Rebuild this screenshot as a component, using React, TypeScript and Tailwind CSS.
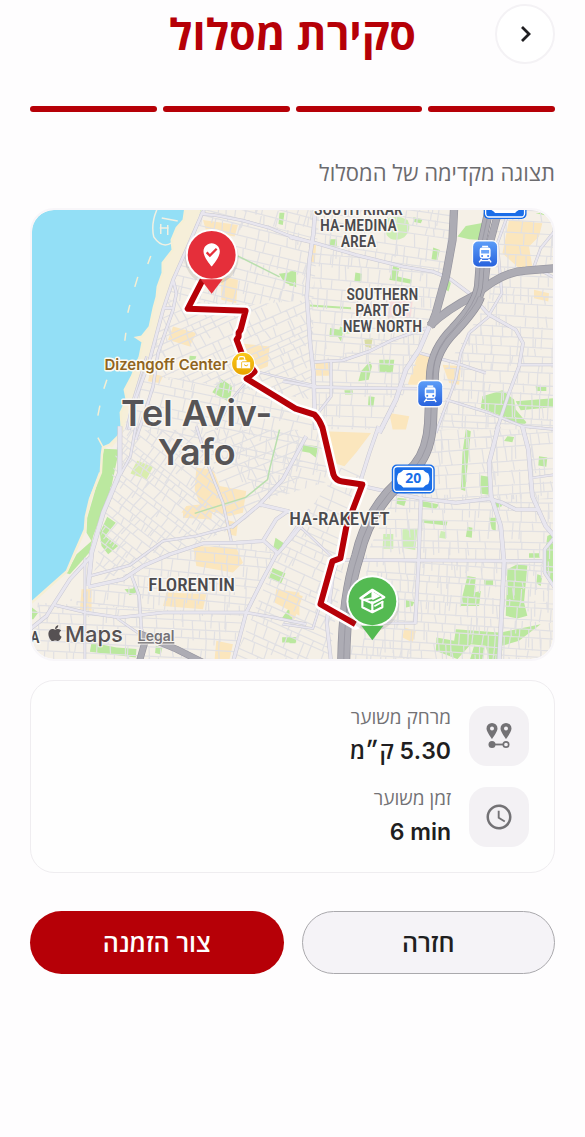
import type { ReactNode } from "react";
import { FaApple } from "react-icons/fa";
import { MdAccessTime, MdWhereToVote } from "react-icons/md";

type Point = [number, number];
type Sheet = "nw" | "ne" | "sw" | "se";

/* The map is drawn on four sheets, each at three units to one map unit. */
const sheetOrigin: Record<Sheet, string> = {
  nw: "translate(30 200) scale(.3333)",
  ne: "translate(290 200) scale(.3333)",
  sw: "translate(30 430) scale(.3333)",
  se: "translate(290 430) scale(.3333)",
};

interface District {
  outline: string;
  center: Point;
  angle: number;
  reach: number;
  row: number;
  block: number;
}

const districts: District[] = [
  { outline: "188,210 320,210 314,300 246,305 160,300", center: [240, 255], angle: 14, reach: 95, row: 8, block: 15 },
  { outline: "160,300 246,305 314,300 314,400 250,390 142,375", center: [230, 345], angle: -24, reach: 100, row: 8, block: 16 },
  { outline: "140,375 250,385 320,415 335,480 270,500 205,440 120,430", center: [225, 430], angle: 12, reach: 120, row: 9, block: 17 },
  { outline: "310,210 455,210 445,275 312,244", center: [380, 240], angle: 8, reach: 90, row: 9, block: 15 },
  { outline: "312,244 445,275 428,330 345,362 312,362", center: [370, 300], angle: 5, reach: 90, row: 10, block: 14 },
  { outline: "314,362 428,330 412,380 385,430 316,430", center: [365, 390], angle: 2, reach: 80, row: 10, block: 16 },
  { outline: "495,210 554,210 554,430 440,430 445,370 490,300", center: [510, 330], angle: 3, reach: 130, row: 9, block: 15 },
  { outline: "120,430 205,430 230,530 160,560 92,585 110,490", center: [160, 500], angle: 38, reach: 95, row: 8, block: 14 },
  { outline: "205,430 300,430 300,480 232,530", center: [255, 480], angle: -22, reach: 80, row: 9, block: 18 },
  { outline: "92,590 170,555 240,542 280,550 248,615 60,605", center: [180, 580], angle: 6, reach: 120, row: 9, block: 15 },
  { outline: "32,603 248,615 236,660 32,660", center: [130, 630], angle: 3, reach: 115, row: 8, block: 16 },
  { outline: "280,550 340,470 372,430 345,560 330,660 235,660", center: [300, 570], angle: 24, reach: 110, row: 8, block: 19 },
  { outline: "395,495 554,495 554,560 365,560", center: [460, 530], angle: 1, reach: 105, row: 10, block: 17 },
  { outline: "430,430 554,430 554,500 400,500", center: [490, 465], angle: -4, reach: 90, row: 10, block: 16 },
  { outline: "365,562 554,562 554,660 350,660", center: [455, 610], angle: 4, reach: 110, row: 9, block: 11 },
];

function streetGrid(d: District, seed: number): string {
  let state = seed * 7919 + 13;
  const random = () => {
    state = (state * 16807) % 2147483647;
    return state / 2147483647;
  };
  const parts: string[] = [];
  for (let y = -d.reach; y < d.reach; ) {
    const height = Math.round(d.row * (0.7 + random() * 0.8));
    const start = -d.reach + Math.round(random() * 30);
    parts.push(`M${start} ${y}L${d.reach} ${y + Math.round(random() * 4 - 2)}`);
    for (let x = start; x < d.reach; x += Math.round(d.block * (0.4 + random()))) {
      const tall = random() > 0.65 ? 2 : 1;
      parts.push(`M${x} ${y}L${x + Math.round(random() * 3 - 1)} ${y + height * tall}`);
    }
    y += height;
  }
  return parts.join("");
}

interface Area {
  sheet: Sheet;
  fill: string;
  d: string;
}

const green = "#bbe89f";
const paleGreen = "#cdeeb5";
const amber = "#fbe6bd";

const areas: Area[] = [
  { sheet: "nw", fill: green, d: "M470 30H515L495 60L470 70ZM750 38H765L760 75L747 72ZM748 222L800 215V262L765 248ZM480 468L500 470L495 485L478 482ZM575 538L608 560L600 608L548 578Z" },
  { sheet: "nw", fill: amber, d: "M520 60L625 75L615 110L530 95ZM575 230L625 240L620 310L575 300ZM430 380L500 400L480 440L415 420ZM620 430L720 440L715 500L690 510L640 480ZM470 300L500 310L495 325L470 325ZM360 520L400 530L390 550L355 545Z" },
  { sheet: "ne", fill: paleGreen, d: "M285 60Q320 40 355 60Q370 90 345 112Q310 130 292 105Z" },
  { sheet: "ne", fill: green, d: "M372 52L400 58L395 70L375 66ZM530 78L600 65L575 120L540 118L505 110ZM122 118H142V140H120ZM432 143L452 150L445 180L427 178ZM0 215L18 212L10 258H0ZM198 218L218 222L215 248L195 245ZM312 198L330 205L325 230L368 240L365 252L300 240ZM62 314L185 322V328L62 320ZM122 385L150 390L152 380L186 392L182 402L160 400L155 425L145 410H120ZM242 485L248 500L238 540L207 545L215 515ZM270 480H315L310 520H270ZM165 572H190V585H167ZM238 590L256 592L252 622L236 618ZM740 560L772 558V574H742ZM478 240L485 250L478 275L470 270ZM680 605L792 596V622L695 632ZM580 590L640 572L675 600L680 630L712 668L700 684L640 650L575 625ZM740 40L790 50L785 35Z" },
  { sheet: "ne", fill: amber, d: "M388 460L425 468L412 555H355ZM660 60L760 70L750 110L720 140L730 200L690 205L640 160ZM460 495L515 500L510 555L480 550ZM78 488L122 490L118 528H80ZM300 640L360 650L350 690H310ZM60 130L80 135L76 190L58 180ZM735 270L780 280L778 305L735 295Z" },
  { sheet: "ne", fill: "#f8dcdc", d: "M300 300L370 305L365 350L295 355Z" },
  { sheet: "ne", fill: "#d9dda3", d: "M225 420L250 415L245 445L228 440Z" },
  { sheet: "sw", fill: green, d: "M222 58L268 60L245 170L190 320L178 370L120 435L110 432L140 375L185 335L170 310L172 265L188 210L208 140ZM232 262L258 280L225 320L265 350L235 375L215 350L210 310ZM738 325L768 345L755 368L732 352ZM730 416L768 432L755 462L718 448ZM315 455L328 485L300 498L284 480L310 478ZM0 530L25 550L10 570H0ZM780 535L792 575L755 570ZM758 624H800V640H758ZM185 640L260 655L320 660L318 685L180 668ZM378 650L398 656L393 676L376 672Z" },
  { sheet: "sw", fill: "#d9edae", d: "M322 94L370 112L350 150L302 132Z" },
  { sheet: "sw", fill: amber, d: "M500 115L550 120L570 170L650 185L640 250L600 260L520 240L455 250L470 230L510 225L495 180ZM460 240L550 230L545 270L460 265ZM490 350L620 355L640 400L610 430L500 410ZM410 490L530 495L520 540L400 530ZM740 480L810 490V560L735 520ZM155 480H185V545L150 540ZM560 635L610 645L600 690H555ZM585 270L625 280L620 320L595 315Z" },
  { sheet: "se", fill: amber, d: "M105 5L245 10L200 70L165 110L130 100ZM0 490L40 500L15 570L0 560ZM345 595L380 605L370 640L340 625Z" },
  { sheet: "se", fill: green, d: "M35 45L85 50L80 85L60 70L35 65ZM530 0L545 5L528 185L515 180L520 70ZM655 20L675 22L670 38L645 34ZM750 80L775 84L772 112L748 108ZM575 138L600 142L598 196L573 192ZM325 205L352 208L345 230L320 222ZM400 215L450 225L440 238L400 232ZM620 210L640 230L625 235L610 215ZM398 270L475 276L472 288L400 280ZM535 292L550 295L548 325L530 322ZM600 265H620V305L608 300ZM720 372H752V385H720ZM745 435L760 440L755 470L742 462ZM655 420L685 405L715 408L705 520L715 560L685 568L650 560ZM535 440L560 445L555 490L575 485L570 530H515L520 500ZM585 450L612 452V468H585ZM500 600L630 610L625 690H600L590 650L545 645L505 690L440 665L442 625L495 635ZM635 610L755 585L690 635L640 650ZM350 512L375 518L370 530L350 535ZM0 625H18V642H0ZM775 320L795 310V470L780 450L765 400ZM625 655L640 660L635 690H625ZM555 650L585 655L580 690H543Z" },
  { sheet: "se", fill: paleGreen, d: "M340 300L385 298L378 362L338 355ZM455 305L470 308V328L450 325ZM282 314H312V358H280Z" },
];

interface Road {
  sheet: Sheet;
  width: number;
  d: string;
}

const streets: Road[] = [
  { sheet: "nw", width: 10, d: "M520 34L470 150L430 240L400 330L360 480L320 590L298 690" },
  { sheet: "nw", width: 9, d: "M430 240L440 280L430 330L385 460L370 560L345 640L318 720M402 325H432" },
  { sheet: "nw", width: 9, d: "M522 30V42L560 46L640 62L720 84L780 108L860 130" },
  { sheet: "nw", width: 6, d: "M680 515L740 530L860 558M655 540L605 600L560 690M350 470L310 600L290 690" },
  { sheet: "ne", width: 12, d: "M78 20L72 100L60 180L52 290L62 430L72 520L75 620L78 690" },
  { sheet: "ne", width: 10, d: "M0 112L80 130L200 165L340 200L430 215L480 235L540 280L600 345L680 390L702 430L690 500L660 580L620 700" },
  { sheet: "ne", width: 9, d: "M75 487L160 482L240 455L310 420L410 385M-20 545L75 562L220 565L385 567" },
  { sheet: "ne", width: 14, d: "M420 380L390 450L350 510L320 600L270 700" },
  { sheet: "ne", width: 8, d: "M125 487V590L82 645M600 350L540 400L515 460L500 540L470 620L440 700M392 460L500 490L590 520M690 495H800M470 600L600 640L700 680L800 690M600 345L638 280L625 130L665 20M800 90L755 145L735 200M740 205L800 235" },
  { sheet: "sw", width: 14, d: "M270 -10V130L220 250L185 370L175 470" },
  { sheet: "sw", width: 8, d: "M318 -10L302 80L272 135M500 -10L540 120L580 220L605 335M180 440L300 408L400 335L500 320L605 292" },
  { sheet: "sw", width: 11, d: "M175 473L280 450L340 410L420 375L520 342L620 340L700 335L740 270L775 245M605 295L690 225L760 150L830 20" },
  { sheet: "sw", width: 11, d: "M690 225L775 245L810 260M700 332L745 372L790 320L830 270M742 372L700 450L650 550L610 700M0 600L50 560L75 520L120 450L180 385" },
  { sheet: "sw", width: 9, d: "M75 528L170 550L270 565L400 550L520 550L650 550L720 562L830 585M305 438L328 500L335 600L350 640" },
  { sheet: "sw", width: 7, d: "M262 568L330 615M165 385V690" },
  { sheet: "se", width: 11, d: "M268 -10L240 70L215 150L170 300L130 440L112 580L125 700M395 200L388 400L378 585M220 170L320 192L400 208L500 220L600 208L640 220L680 240L745 240" },
  { sheet: "se", width: 13, d: "M628 -10L600 100L606 200L635 290L645 400L630 700M700 -10L718 60L730 200L770 290L800 325" },
  { sheet: "se", width: 10, d: "M160 392L390 393L760 395M800 320L767 360V430L800 480" },
  { sheet: "se", width: 7, d: "M730 145L800 135M200 582H380M30 290L130 385M-20 585L70 598L95 520M-20 350L60 240" },
];

const trunkRoads: Road[] = [
  { sheet: "sw", width: 20, d: "M345 640L328 700M330 614L440 660L520 700" },
  { sheet: "ne", width: 24, d: "M495 20L490 120L470 230L440 340L425 380" },
  { sheet: "ne", width: 24, d: "M422 378Q470 330 560 285Q640 215 710 212L800 205" },
  { sheet: "ne", width: 22, d: "M632 20L600 140L588 240L568 300" },
];

const motorways: Road[] = [
  { sheet: "ne", width: 26, d: "M602 20L578 130L568 260Q560 310 500 380Q440 440 434 500L428 600" },
  { sheet: "ne", width: 38, d: "M568 290Q560 320 495 390Q435 450 430 520L424 670Q420 750 380 800L300 880Q230 960 205 1070Q165 1190 163 1390" },
];

/* Each layer redraws the same roads: casing, surface, then the centre line. */
function Roads({ roads, color, extra = 0, line }: { roads: Road[]; color: string; extra?: number; line?: number }) {
  return (
    <g fill="none" stroke={color} strokeLinejoin="round">
      {roads.map((road, i) => (
        <path key={i} transform={sheetOrigin[road.sheet]} d={road.d} strokeWidth={line ?? road.width + extra} />
      ))}
    </g>
  );
}

function AreaName({ x, y, lines, large = false }: { x: number; y: number; lines: string[]; large?: boolean }) {
  return (
    <text
      className={
        large
          ? "font-['Roboto_Condensed','Liberation_Sans_Narrow',Roboto,sans-serif] text-[19px] font-medium"
          : "font-['Roboto_Condensed','Liberation_Sans_Narrow',Roboto,sans-serif] text-[16px] font-medium"
      }
      fill="#4b4a4d"
      stroke="#faf8f4"
      strokeWidth="3"
      strokeLinejoin="round"
      paintOrder="stroke"
      textAnchor="middle"
    >
      {lines.map((line, i) => (
        <tspan key={line} x={x} y={y + i * 16}>
          {line}
        </tspan>
      ))}
    </text>
  );
}

function Station({ x, y }: { x: number; y: number }) {
  return (
    <g transform={`translate(${x} ${y})`}>
      <rect x="-13" y="-14" width="26" height="28" rx="6" fill="#fff" opacity=".9" />
      <rect x="-12" y="-12.500" width="24" height="25" rx="5" fill="url(#station)" />
      <path d="M-3-7.500H3" stroke="#fff" strokeWidth="1.500" />
      <rect x="-5.500" y="-6.500" width="11" height="11" rx="2.500" fill="#fff" />
      <path d="M-4-4H4V-.5H-4Z" fill="#6ba4f8" />
      <circle cx="-3" cy="2" r="1" fill="#3b7df0" />
      <circle cx="3" cy="2" r="1" fill="#3b7df0" />
      <path d="M-3.500 5L-6 8.500M3.500 5L6 8.500M-4.500 6.700H4.500" stroke="#fff" strokeWidth="1.400" />
    </g>
  );
}

function RoadShield({ x, y, label }: { x: number; y: number; label?: string }) {
  return (
    <g transform={`translate(${x} ${y})`}>
      <rect x="-21.500" y="-14" width="43" height="29" rx="5" fill="#1a6ee8" />
      <rect x="-19.500" y="-12" width="39" height="25" rx="3.500" fill="#1a6ee8" stroke="#fff" strokeWidth="1.300" />
      <path d="M-10-8.500H10Q12-6 15-5Q17.500 0 15 5.500Q12 6.500 10 9H-10Q-12 6.500-15 5.500Q-17.500 0-15-5Q-12-6-10-8.500Z" fill="#fff" />
      {label && (
        <text className="font-['Open_Sans',sans-serif] text-[14px] font-bold" y="5" fill="#1a6ee8" textAnchor="middle">
          {label}
        </text>
      )}
    </g>
  );
}

function Pin({ x, y, color, children }: { x: number; y: number; color: string; children: ReactNode }) {
  return (
    <g transform={`translate(${x} ${y})`}>
      <circle cy="3" r="27" fill="#555" opacity=".14" />
      <circle r="26" fill="#fff" />
      <circle r="24" fill={color} />
      <path d="M-11 24.500H11L0 39Z" fill={color} />
      {children}
    </g>
  );
}

const coast =
  "M20 200H187L184 220L177 228L172 240L173 250L163 263L163 273L158 287L157 297L154 308L150 327L142 337L137 338L143 342L140 357L132 377L125 390L127 400L121 413L122 430L118 437L110 445L103 448L102 455L101 473L90 500L86 517L85 530L75 553L67 572L50 587L32 603L20 610Z";
const routeLine =
  "M203 280L188 309L246 311L241 330L239 333V337L237 340L243 356L255 372L247 379L296 409L315 415Q320 420 323 428L334 475Q336 481 343 482L363 485L347 527L341 559L333 562L321 605L356 625";

function RouteMap() {
  return (
    <svg
      viewBox="32 210 522 450"
      className="block h-auto w-full rounded-[22px] [direction:ltr]"
      role="img"
      aria-label="Tel Aviv-Yafo"
    >
      <defs>
        <linearGradient id="station" x2="0" y2="1">
          <stop stopColor="#5b9cf8" />
          <stop offset="1" stopColor="#2862dd" />
        </linearGradient>
        <linearGradient id="shop" x2="0" y2="1">
          <stop stopColor="#f9c81c" />
          <stop offset="1" stopColor="#e8a300" />
        </linearGradient>
        {districts.map((d, i) => (
          <clipPath key={i} id={`district-${i}`}>
            <polygon points={d.outline} />
          </clipPath>
        ))}
      </defs>

      <rect x="32" y="210" width="522" height="450" fill="#f5f0e7" />
      {areas.map((area, i) => (
        <path key={i} transform={sheetOrigin[area.sheet]} fill={area.fill} d={area.d} />
      ))}
      {districts.map((d, i) => (
        <g key={i} clipPath={`url(#district-${i})`}>
          <path
            transform={`translate(${d.center[0]} ${d.center[1]}) rotate(${d.angle})`}
            d={streetGrid(d, i + 3)}
            fill="none"
            stroke="#e1e0e3"
            strokeWidth="1.200"
          />
        </g>
      ))}

      <path d="M185 205H203L186 250L176 278L164 310L152 348L140 382L132 402L122 436L112 448L96 440Z" fill="#f6efd9" />
      <path d={coast} fill="#93dff6" stroke="#f6efd4" strokeWidth="2.500" />
      <path d="M157 210Q151 224 154 237Q162 249 172 243M162 218L178 221M160 228H169M161 224V234M168 225V235" fill="none" stroke="#f1f0e2" strokeWidth="1.500" />
      <path d="M151 256L148 264M138 277L135 287M130 305L128 313M126 333L125 341M107 380L104 389M100 406L98 416M98 438L104 449" stroke="#f6efd4" strokeWidth="1.500" />
      <path d="M100 473L91 497L88 512" fill="none" stroke="#f6efd4" strokeWidth="2" />

      <path d="M238 256L262 268L280 277M280 430L270 470L268 480L246 498L195 514" fill="none" stroke="#b9dfae" strokeWidth="1.500" />
      <Roads roads={streets} color="#c9c8d2" extra={1} />
      <Roads roads={streets} color="#e8e6ef" extra={-2} />
      <Roads roads={trunkRoads} color="#9796a0" extra={1} />
      <Roads roads={trunkRoads} color="#adacb4" extra={-3} />
      <Roads roads={motorways} color="#8f8e98" extra={1} />
      <Roads roads={motorways} color="#adacb4" extra={-3} />
      <Roads roads={motorways} color="#92919b" line={2} />

      <path d={routeLine} fill="none" stroke="#fff" strokeWidth="11" strokeLinejoin="round" strokeLinecap="round" />
      <path d={routeLine} fill="none" stroke="#b60007" strokeWidth="6" strokeLinejoin="round" />

      <AreaName x={359} y={215} lines={["SOUTH KIKAR", "HA-MEDINA", "AREA"]} />
      <AreaName x={383} y={300} lines={["SOUTHERN", "PART OF", "NEW NORTH"]} />
      <AreaName x={340} y={526} lines={["HA-RAKEVET"]} large />
      <AreaName x={192} y={592} lines={["FLORENTIN"]} large />
      <AreaName x={35} y={644} lines={["A"]} />

      <g className="font-[Inter,sans-serif]" paintOrder="stroke" strokeLinejoin="round">
        <text className="text-[36px] font-semibold" fill="#565456" stroke="#f8f6f2" strokeWidth="3" textAnchor="middle">
          <tspan x="197" y="426">Tel Aviv-</tspan>
          <tspan x="197" y="465">Yafo</tspan>
        </text>
        <text className="text-[15px] font-semibold" x="228" y="370" fill="#8f6420" stroke="#fdfaf2" strokeWidth="3" textAnchor="end">
          Dizengoff Center
        </text>
        <text className="text-[22px] font-medium" x="65" y="643" fill="#565153" stroke="#f8f6f2" strokeWidth="2">
          Maps
        </text>
        <a href="#legal">
          <text className="text-[14px] font-semibold underline" x="138" y="642" fill="#757276" stroke="#f8f6f2" strokeWidth="2">
            Legal
          </text>
        </a>
      </g>
      <FaApple x="46" y="625" width="18" height="18" size={18} color="#565153" />

      <circle cx="243.500" cy="364" r="12" fill="#fff" />
      <circle cx="243.500" cy="364" r="11" fill="url(#shop)" />
      <path d="M239 360V358.500Q239 357 241 357H243Q245 357 245 358.500V360M242.500 363V361.500Q242.500 360.500 244 360.500" fill="none" stroke="#fff" strokeWidth="1.300" />
      <rect x="237" y="360" width="10" height="8.500" rx="1" fill="#fff" />
      <rect x="242" y="362" width="9" height="7" rx="1" fill="#fff" stroke="#f0b20c" strokeWidth=".8" />
      <path d="M244.500 365Q246.500 367.500 248.500 365" fill="none" stroke="#f0b20c" />

      <Station x={486} y={254} />
      <Station x={431} y={394} />
      <RoadShield x={506} y={204} />
      <RoadShield x={414} y={479} label="20" />

      <Pin x={212} y={255} color="#e52f3a">
        <MdWhereToVote x="-14" y="-14" width="28" height="28" size={28} color="#fff" />
      </Pin>
      <Pin x={373} y={602} color="#54ba52">
        <g fill="none" stroke="#fff" strokeWidth="2.200" strokeLinejoin="round">
          <path d="M-10-3V6L0 11L10 6V0M0 0V11M-12-3L0 2L12-4L0-11.500Z" />
          <path d="M-10-4L0-11V-3L-10-1M2 5L11 0" strokeWidth="1.800" />
          <path d="M0-10L8-5L0-1Z" fill="#fff" stroke="none" />
        </g>
      </Pin>
    </svg>
  );
}

function DistanceIcon() {
  return (
    <svg viewBox="0 0 28 28" className="size-7" fill="none" aria-hidden="true">
      <path
        d="M7 1a5.500 5.500 0 0 0-5.500 5.500C1.500 10 7 17 7 17s5.500-7 5.500-10.500A5.500 5.500 0 0 0 7 1Zm0 7.500a2 2 0 1 1 0-4 2 2 0 0 1 0 4ZM21 1a5.500 5.500 0 0 0-5.500 5.500C15.500 10 21 17 21 17s5.500-7 5.500-10.500A5.500 5.500 0 0 0 21 1Zm0 7.500a2 2 0 1 1 0-4 2 2 0 0 1 0 4Z"
        fill="#737275"
      />
      <circle cx="7" cy="22.500" r="3.500" fill="#737275" />
      <path d="M9 22.500H18" stroke="#737275" strokeWidth="1.800" />
      <circle cx="21" cy="22.500" r="2.700" stroke="#737275" strokeWidth="1.700" />
    </svg>
  );
}

function Metric({ icon, label, value }: { icon: ReactNode; label: string; value: string }) {
  return (
    <div className="flex items-center gap-[18px]">
      <span className="flex size-[60px] shrink-0 items-center justify-center rounded-[18px] bg-[#f3f1f4]">{icon}</span>
      <div>
        <dt className="text-[19px] leading-6 text-[#737275]">{label}</dt>
        <dd className="mt-[6px] text-right font-[Inter,'Open_Sans',sans-serif] text-[23px] leading-8 font-semibold text-[#1f1e21]">
          <bdi>{value}</bdi>
        </dd>
      </div>
    </div>
  );
}

export default function App() {
  return (
    <main
      dir="rtl"
      lang="he"
      className="min-h-screen bg-[#fefdfe] px-[30px] pt-1 font-['Open_Sans','Liberation_Sans',sans-serif]"
    >
      <header className="grid grid-cols-[60px_1fr_60px] items-center">
        <button
          type="button"
          aria-label="חזרה"
          className="flex size-[60px] items-center justify-center rounded-full border-2 border-[#f4f2f5] bg-white"
        >
          <svg viewBox="0 0 20 20" className="size-5" fill="none" stroke="#1f1e21" strokeWidth="2.800" aria-hidden="true">
            <path d="M7 3L14 10L7 17" />
          </svg>
        </button>
        <h1 className="text-center text-[43px] leading-[60px] font-bold text-[#b60007]">סקירת מסלול</h1>
      </header>

      <div className="mt-[42px] grid grid-cols-4 gap-[6px]">
        {[1, 2, 3, 4].map((step) => (
          <span key={step} className="h-[6px] rounded-full bg-[#b60007]" />
        ))}
      </div>

      <h2 className="mt-[46px] text-[22px] leading-7 font-medium text-[#6c6b6e]">תצוגה מקדימה של המסלול</h2>

      <div className="mt-[22px] overflow-hidden rounded-[24px] border-2 border-[#f8f6f9]">
        <RouteMap />
      </div>

      <dl className="mt-[19px] flex flex-col gap-[19px] rounded-[24px] border border-[#efedf0] bg-[#fefefe] px-[25px] py-6">
        <Metric icon={<DistanceIcon />} label="מרחק משוער" value="5.30 ק״מ" />
        <Metric icon={<MdAccessTime size={30} color="#737275" />} label="זמן משוער" value="6 min" />
      </dl>

      <div className="mt-[38px] grid grid-cols-2 gap-[18px] text-[25px] font-semibold">
        <button type="button" className="h-[63px] rounded-full border border-[#aaa9ad] bg-[#f5f3f7] text-[#1f1e21]">
          חזרה
        </button>
        <button type="button" className="h-[63px] rounded-full bg-[#b60007] text-white">
          צור הזמנה
        </button>
      </div>
    </main>
  );
}
